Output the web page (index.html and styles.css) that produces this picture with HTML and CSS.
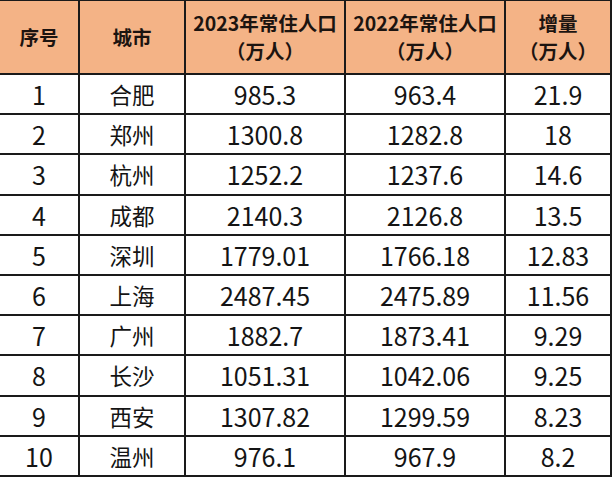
FILE: index.html
```html
<!DOCTYPE html>
<html lang="zh-CN">
<head>
<meta charset="utf-8">
<title>常住人口增量</title>
<link rel="stylesheet" href="styles.css">
</head>
<body>
<div class="table">
  <div class="th">序号</div>
  <div class="th">城市</div>
  <div class="th">2023年常住人口<br>（万人）</div>
  <div class="th">2022年常住人口<br>（万人）</div>
  <div class="th">增量<br>（万人）</div>

  <div class="td num">1</div><div class="td city">合肥</div><div class="td num">985.3</div><div class="td num">963.4</div><div class="td num">21.9</div>
  <div class="td num">2</div><div class="td city">郑州</div><div class="td num">1300.8</div><div class="td num">1282.8</div><div class="td num">18</div>
  <div class="td num">3</div><div class="td city">杭州</div><div class="td num">1252.2</div><div class="td num">1237.6</div><div class="td num">14.6</div>
  <div class="td num">4</div><div class="td city">成都</div><div class="td num">2140.3</div><div class="td num">2126.8</div><div class="td num">13.5</div>
  <div class="td num">5</div><div class="td city">深圳</div><div class="td num">1779.01</div><div class="td num">1766.18</div><div class="td num">12.83</div>
  <div class="td num">6</div><div class="td city">上海</div><div class="td num">2487.45</div><div class="td num">2475.89</div><div class="td num">11.56</div>
  <div class="td num">7</div><div class="td city">广州</div><div class="td num">1882.7</div><div class="td num">1873.41</div><div class="td num">9.29</div>
  <div class="td num">8</div><div class="td city">长沙</div><div class="td num">1051.31</div><div class="td num">1042.06</div><div class="td num">9.25</div>
  <div class="td num">9</div><div class="td city">西安</div><div class="td num">1307.82</div><div class="td num">1299.59</div><div class="td num">8.23</div>
  <div class="td num">10</div><div class="td city">温州</div><div class="td num">976.1</div><div class="td num">967.9</div><div class="td num">8.2</div>
</div>
</body>
</html>
```
FILE: styles.css
```css
html, body {
  margin: 0;
  padding: 0;
  background: #ffffff;
}

body {
  width: 613px;
  height: 478px;
  overflow: hidden;
  font-family: "Noto Sans CJK SC", "Noto Sans", sans-serif;
  color: #141414;
}

.table {
  display: grid;
  grid-template-columns: 78px 104px 158px 158px 104px;
  grid-template-rows: 72px repeat(10, 38.2px);
  gap: 2px;
  padding: 1px 2px 2px 0;
  background: #1a1a1a;
  width: fit-content;
}

.th {
  background: #f4b386;
  font-weight: 700;
  font-size: 19.5px;
  line-height: 28px;
  text-align: center;
  display: flex;
  align-items: center;
  justify-content: center;
  color: #1c1410;
}

.td {
  background: #ffffff;
  display: flex;
  align-items: center;
  justify-content: center;
  text-align: center;
}

.num {
  font-size: 25px;
}

.city {
  font-size: 22.5px;
}
```
